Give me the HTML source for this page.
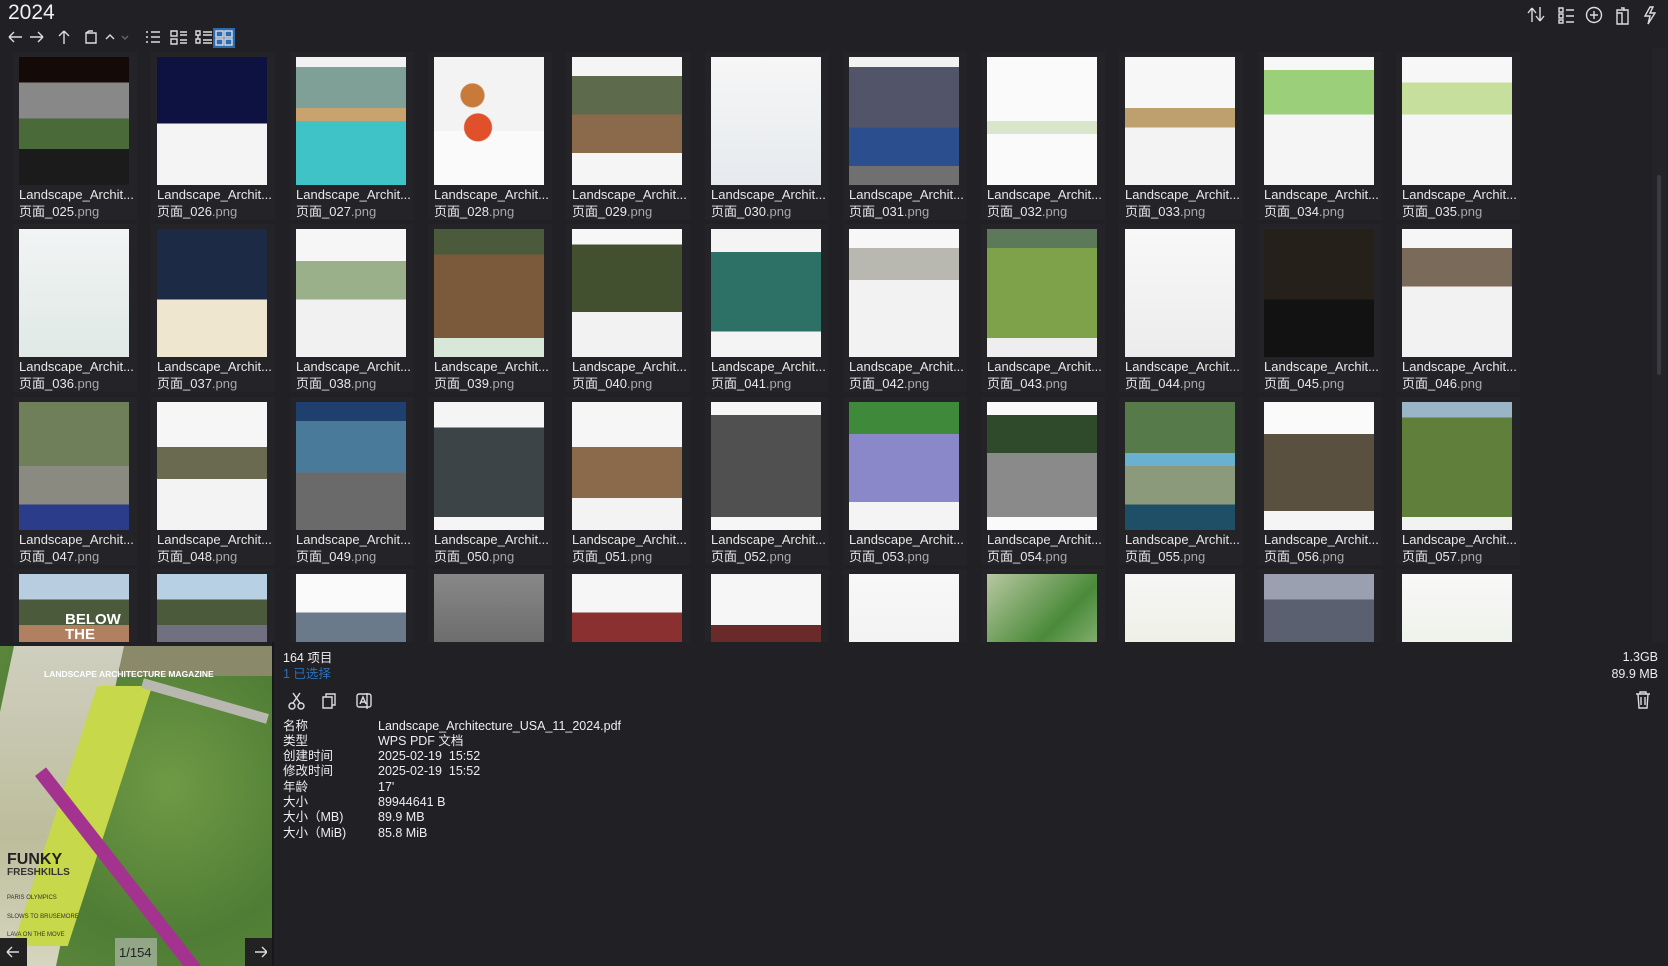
<!DOCTYPE html>
<html><head><meta charset="utf-8"><style>
*{margin:0;padding:0;box-sizing:border-box}
body{width:1668px;height:966px;background:#202025;overflow:hidden;position:relative;font-family:"Liberation Sans","Noto Sans CJK SC",sans-serif;color:#e6e6e6}
.a{position:absolute}
.grid{position:absolute;left:0;top:48px;width:1650px;height:594px;overflow:hidden;background:#202025}
.tile{position:absolute;width:124px;height:168px;background:#232328}
.th{position:absolute;left:6px;top:5px;width:110px;height:128px;background:#fff;overflow:hidden}
.l1,.l2{position:absolute;left:6px;font-size:13px;line-height:16px;color:#e8e8e8;white-space:nowrap}
.l1{top:135px}.l2{top:152px}
.l2 span{color:#a8a8a8}
.ic{stroke:#ddd;fill:none;stroke-width:1.4}
.lab,.val{position:absolute;font-size:12.5px;line-height:15px;height:15px;color:#eee;white-space:nowrap}
.lab{left:283px}.val{left:378px}
</style></head><body>
<div class="a" style="left:8px;top:1px;font-size:21px;color:#f0f0f0">2024</div>
<svg class="a" style="left:6px;top:28px" width="240" height="20">
<g class="ic"><path d="M3 9h13M3 9l5-5M3 9l5 5"/><path d="M24 9h13M37 9l-5-5M37 9l-5 5"/><path d="M58 3v13M58 3l-5 5M58 3l5 5"/>
<path d="M80 5h10v10h-10zM80 5l3-2h4"/><path d="M100 11l4-4 4 4"/><path d="M116 8l3 3 3-3" stroke="#666"/>
<path d="M140 4h2M140 9h2M140 14h2M145 4h9M145 9h9M145 14h9"/>
<path d="M165 3h6v5h-6zM165 11h6v5h-6zM174 4h7M174 7h7M174 12h7M174 15h7"/>
<path d="M190 3h4v4h-4zM190 11h4v4h-4zM197 4h9M197 7h9M197 12h9M197 15h9M192 7v4"/></g>
<rect x="207" y="0" width="22" height="20" fill="#2b6bb0"/>
<g class="ic" stroke="#dfe9f7"><rect x="210" y="3" width="7" height="6"/><rect x="219" y="3" width="7" height="6"/><rect x="210" y="11" width="7" height="6"/><rect x="219" y="11" width="7" height="6"/></g>
</svg>
<svg class="a" style="left:1526px;top:4px" width="142" height="22">
<g class="ic"><path d="M6 18V4M6 4l-4 5M6 4l4 5M14 3v14M14 17l-4-5M14 17l4-5"/>
<path d="M33 4h4v4h-4zM33 10h4v4h-4zM33 16h4v3h-4zM40 6h8M40 12h8M40 18h8"/>
<circle cx="68" cy="11" r="7.5"/><path d="M68 7v8M64 11h8"/>
<path d="M91 6h11v14h-11zM95 4h3v3M91 9h5v11"/>
<path d="M124 3l-5 9h5l-2 8 7-11h-5l3-6z"/></g></svg>
<div class="a" style="left:1652px;top:48px;width:14px;height:594px;background:#232328"></div>
<div class="a" style="left:1657px;top:175px;width:4px;height:200px;background:#3a3a40;border-radius:2px"></div>

<div class="grid" id="g"></div>

<!-- preview -->
<div class="a" style="left:0;top:646px;width:272px;height:320px;overflow:hidden;background:#5d8a3c">
<div class="a" style="left:0;top:0;width:272px;height:320px;background:radial-gradient(ellipse at 170px 140px,#6f9a45 0,#4f7d35 60%,#5f8a3e 100%)"></div>
<div class="a" style="left:120px;top:0;width:160px;height:30px;background:#8a8a6a"></div>
<div class="a" style="left:-20px;top:0;width:110px;height:320px;background:linear-gradient(180deg,#cfcfc0,#bdbd9c 60%,#d6d6c0);transform:skewX(-12deg)"></div>
<div class="a" style="left:55px;top:40px;width:55px;height:260px;background:#c7d94a;transform:skewX(-18deg)"></div>
<div class="a" style="left:35px;top:130px;width:14px;height:260px;background:#a4338f;transform:rotate(-38deg);transform-origin:0 0"></div>
<div class="a" style="left:140px;top:50px;width:130px;height:10px;background:#b8b8b0;transform:rotate(16deg)"></div>
<div class="a" style="left:44px;top:23px;font-size:8.5px;font-weight:bold;color:#fff;white-space:nowrap">LANDSCAPE ARCHITECTURE MAGAZINE</div>
<div class="a" style="left:7px;top:205px;font-size:16px;font-weight:bold;color:#222">FUNKY</div>
<div class="a" style="left:7px;top:221px;font-size:10px;font-weight:bold;color:#333">FRESHKILLS</div>
<div class="a" style="left:7px;top:249px;font-size:6px;color:#333">PARIS OLYMPICS</div>
<div class="a" style="left:7px;top:268px;font-size:6px;color:#333">SLOWS TO BRUSEMORE</div>
<div class="a" style="left:7px;top:286px;font-size:6px;color:#333">LAVA ON THE MOVE</div>
<div class="a" style="left:0;top:292px;width:27px;height:28px;background:#222"></div>
<div class="a" style="left:245px;top:292px;width:27px;height:28px;background:#222"></div>
<div class="a" style="left:115px;top:292px;width:42px;height:28px;background:rgba(200,200,200,.55)"></div>
<div class="a" style="left:119px;top:299px;font-size:13px;color:#222">1/154</div>
<svg class="a" style="left:5px;top:298px" width="262" height="16"><g class="ic" stroke="#eee"><path d="M2 8h12M2 8l5-5M2 8l5 5M250 8h12M262 8l-5-5M262 8l-5 5"/></g></svg>
</div>
<div class="a" style="left:272px;top:642px;width:2px;height:324px;background:#18181c"></div>

<div class="a" style="left:283px;top:651px;font-size:12.5px;line-height:15px;color:#f0f0f0">164 项目</div>
<div class="a" style="left:283px;top:667px;font-size:12.5px;line-height:15px;color:#2d6fba">1 已选择</div>
<svg class="a" style="left:287px;top:690px" width="90" height="22"><g class="ic"><circle cx="5" cy="16" r="3"/><circle cx="14" cy="16" r="3"/><path d="M6 13L13 3M13 13L6 3"/>
<path d="M36 7h9v11h-9zM39 7V4h9v11h-3"/><rect x="70" y="4" width="14" height="13" rx="2"/><path d="M73 14l3-7 3 7M74 12h4M80 3v16"/></g></svg>
<div class="lab" style="top:719px">名称</div><div class="val" style="top:719px">Landscape_Architecture_USA_11_2024.pdf</div>
<div class="lab" style="top:734px">类型</div><div class="val" style="top:734px">WPS PDF 文档</div>
<div class="lab" style="top:749px">创建时间</div><div class="val" style="top:749px">2025-02-19&nbsp; 15:52</div>
<div class="lab" style="top:764px">修改时间</div><div class="val" style="top:764px">2025-02-19&nbsp; 15:52</div>
<div class="lab" style="top:780px">年龄</div><div class="val" style="top:780px">17'</div>
<div class="lab" style="top:795px">大小</div><div class="val" style="top:795px">89944641 B</div>
<div class="lab" style="top:810px">大小（MB)</div><div class="val" style="top:810px">89.9 MB</div>
<div class="lab" style="top:826px">大小（MiB)</div><div class="val" style="top:826px">85.8 MiB</div>
<div class="a" style="right:10px;top:650px;font-size:12.5px;color:#eee;text-align:right">1.3GB</div>
<div class="a" style="right:10px;top:667px;font-size:12.5px;color:#eee;text-align:right">89.9 MB</div>
<svg class="a" style="left:1634px;top:690px" width="18" height="20"><g class="ic"><path d="M2 4h14M6 4V2h6v2M4 4l1 14h8l1-14M7 7v8M11 7v8"/></g></svg>

<script>
var T=[
["#111","linear-gradient(#140a08 0 20%,#888 20% 48%,#4a6a3a 48% 72%,#1b1b1b 72%)"],
["","linear-gradient(#0d1240 0 52%,#f4f4f4 52%)"],
["","linear-gradient(#f2f2f2 0 8%,#7fa096 8% 40%,#c9a36f 40% 50%,#3fc3c7 50%)"],
["","radial-gradient(circle at 35% 30%,#c87a3a 0 10%,transparent 11%),radial-gradient(circle at 40% 55%,#e0502a 0 14%,transparent 15%),linear-gradient(#f3f3f3 0 58%,#fafafa 58%)"],
["","linear-gradient(#f5f5f5 0 15%,#5d6a4c 15% 45%,#8a6a4a 45% 75%,#f5f5f5 75%)"],
["","linear-gradient(#f6f6f6,#e6eaee)"],
["","linear-gradient(#f2f2f2 0 8%,#52556a 8% 55%,#2b4e8e 55% 85%,#707070 85%)"],
["","linear-gradient(#fafafa 0 50%,#d9e6cc 50% 60%,#fafafa 60%)"],
["","linear-gradient(#f7f7f7 0 40%,#bda06e 40% 55%,#f3f3f3 55%)"],
["","linear-gradient(#f7f7f7 0 10%,#9ccf7a 10% 45%,#f5f5f5 45%)"],
["","linear-gradient(#f7f7f7 0 20%,#c7df9c 20% 45%,#f5f5f5 45%)"],
["","linear-gradient(#f2f4f4,#dfe9e6)"],
["","linear-gradient(#1d2a46 0 55%,#efe6cf 55%)"],
["","linear-gradient(#f6f6f6 0 25%,#9ab08a 25% 55%,#f1f1f1 55%)"],
["","linear-gradient(#4a5a3a 0 20%,#7a5a3a 20% 85%,#d8e8d8 85%)"],
["","linear-gradient(#f7f7f7 0 12%,#42502f 12% 65%,#f2f2f2 65%)"],
["","linear-gradient(#f4f4f4 0 18%,#2d7166 18% 80%,#f4f4f4 80%)"],
["","linear-gradient(#f7f7f7 0 15%,#b8b8b0 15% 40%,#f2f2f2 40%)"],
["","linear-gradient(#5c7a5a 0 15%,#7da24a 15% 85%,#eeeeee 85%)"],
["","linear-gradient(#f8f8f8,#ececec)"],
["","linear-gradient(#25201a 0 55%,#121212 55%)"],
["","linear-gradient(#f6f6f6 0 15%,#7a6a5a 15% 45%,#f2f2f2 45%)"],
["","linear-gradient(#6f7f5a 0 50%,#8a8a80 50% 80%,#2a3c8a 80%)"],
["","linear-gradient(#f6f6f6 0 35%,#6a6a50 35% 60%,#f3f3f3 60%)"],
["","linear-gradient(#1f3f6f 0 15%,#4a7a9a 15% 55%,#6a6a6a 55%)"],
["","linear-gradient(#f5f5f5 0 20%,#3c4448 20% 90%,#f5f5f5 90%)"],
["","linear-gradient(#f6f6f6 0 35%,#8a6a4a 35% 75%,#f3f3f3 75%)"],
["","linear-gradient(#f6f6f6 0 10%,#505050 10% 90%,#f6f6f6 90%)"],
["","linear-gradient(#3f8a3a 0 25%,#8a88c8 25% 78%,#f4f4f4 78%)"],
["","linear-gradient(#fafafa 0 10%,#2f4a2a 10% 40%,#8a8a8a 40% 90%,#fafafa 90%)"],
["","linear-gradient(#567a4a 0 40%,#6ab0d0 40% 50%,#8a9a7a 50% 80%,#1f4f66 80%)"],
["","linear-gradient(#fafafa 0 25%,#5a5040 25% 85%,#f5f5f5 85%)"],
["","linear-gradient(#9ab6c6 0 12%,#5f7f3a 12% 90%,#f2f2f2 90%)"],
["","linear-gradient(#b8cde0 0 20%,#4a5a3a 20% 40%,#b08060 40%)"],
["","linear-gradient(#b8d0e4 0 20%,#4a5a3a 20% 40%,#707080 40%)"],
["","linear-gradient(#fafafa 0 30%,#6a7a8a 30% 90%,#fafafa 90%)"],
["","linear-gradient(#888,#555)"],
["","linear-gradient(#f6f6f6 0 30%,#8a3030 30% 60%,#f6f6f6 60%)"],
["","linear-gradient(#f6f6f6 0 40%,#6a2a2a 40%)"],
["","linear-gradient(#f8f8f8,#eeeeee)"],
["","linear-gradient(135deg,#b8c8a0,#4a8a3a,#b8d0a0)"],
["","linear-gradient(#f6f6f6,#e8ecd8)"],
["","linear-gradient(#9aa0b0 0 20%,#5a6070 20% 60%,#8a4040 60%)"],
["","linear-gradient(#f8f8f8,#e8eee0)"]];
var g=document.getElementById('g'),h='';
for(var r=0;r<4;r++)for(var c=0;c<11;c++){var i=r*11+c;
var num=25+r*11+c;var x=13+Math.round(c*138.3),y=4+Math.round(r*172.3);
var nm=('00'+(num)).slice(-3);
h+='<div class="tile" style="left:'+x+'px;top:'+y+'px"><div class="th" style="background:'+T[i][1]+'"></div>'+(r<3?'<div class="l1">Landscape_Archit...</div><div class="l2">页面_'+nm+'<span>.png</span></div>':'')+'</div>';}
g.innerHTML=h;
</script>
<div class="a" style="left:65px;top:612px;font-size:15px;font-weight:bold;color:#fff;line-height:15px">BELOW<br>THE</div>
</body></html>
